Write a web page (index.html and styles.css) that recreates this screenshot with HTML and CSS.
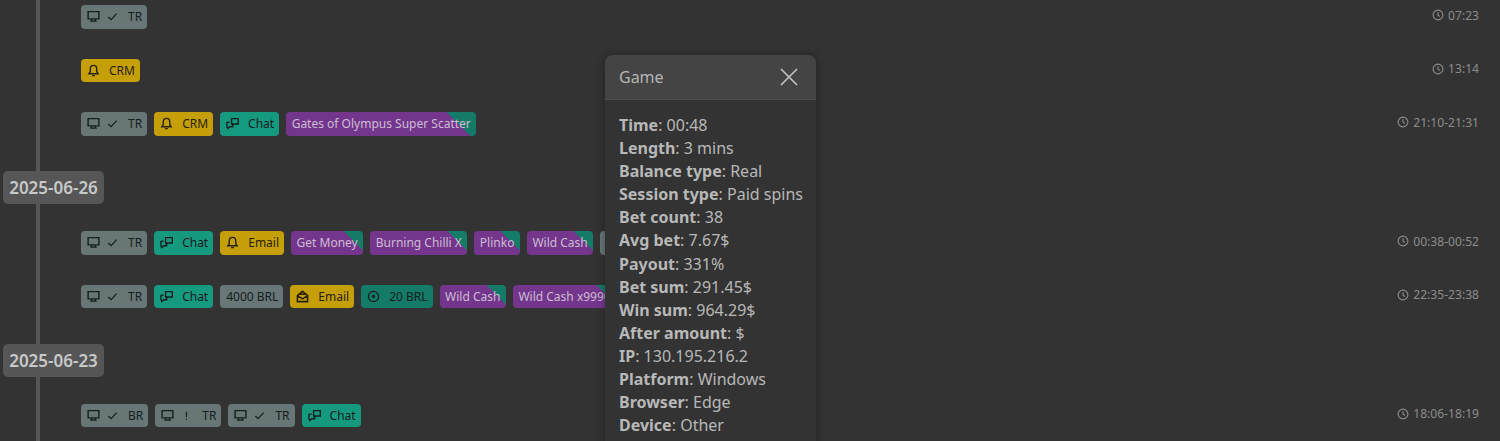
FILE: index.html
```html
<!DOCTYPE html>
<html lang="en">
<head>
    <meta charset="UTF-8">
    <meta name="viewport" content="width=device-width, initial-scale=1.0">
    <title>Player timeline</title>
    <link rel="stylesheet" href="styles.css">
</head>
<body>
    <!-- icon sprite -->
    <svg class="sprite" xmlns="http://www.w3.org/2000/svg">
        <symbol id="i-desktop" viewBox="0 0 14 14"><path d="M1.2 1.800h11.600v7.700H1.200zM5 9.500v2.500M9 9.500v2.500M3.500 12h7" fill="none" stroke="currentColor" stroke-width="1.500"/></symbol>
        <symbol id="i-check" viewBox="0 0 14 14"><path d="M2.500 7.500l3 3 6-6.500" fill="none" stroke="currentColor" stroke-width="1.300"/></symbol>
        <symbol id="i-warn" viewBox="0 0 14 14"><path d="M7 3v5.500M7 10.200v1.500" fill="none" stroke="currentColor" stroke-width="1.300"/></symbol>
        <symbol id="i-bell" viewBox="0 0 14 14"><path d="M7 1.500c-2.400 0-3.500 1.800-3.500 4v2.800L2 10.500h10L10.500 8.300V5.500c0-2.200-1.100-4-3.500-4zM5.500 12.500h3" fill="none" stroke="currentColor" stroke-width="1.500"/></symbol>
        <symbol id="i-chat" viewBox="0 0 14 14"><path d="M6 1.800h7.200v5.700H8.500L7 9V7.500H6zM1 5.500h3M1 5.500v5L2 12.500l2-2h4" fill="none" stroke="currentColor" stroke-width="1.500"/></symbol>
        <symbol id="i-mail" viewBox="0 0 14 14"><path d="M1.500 6L7 1.500 12.500 6v6.500h-11zM1.500 6L7 9.500 12.500 6M4 4.500h6" fill="none" stroke="currentColor" stroke-width="1.700"/></symbol>
        <symbol id="i-target" viewBox="0 0 14 14"><circle cx="7" cy="7" r="5.500" fill="none" stroke="currentColor" stroke-width="1.400"/><circle cx="7" cy="7" r="1.800" fill="currentColor"/></symbol>
        <symbol id="i-clock" viewBox="0 0 14 14"><circle cx="7" cy="7" r="5.700" fill="none" stroke="currentColor" stroke-width="1.300"/><path d="M7 3.800V7l2 2" fill="none" stroke="currentColor" stroke-width="1.300"/></symbol>
    </svg>

    <main class="timeline">
        <div class="event">
            <div class="badges">
                <span class="badge device"><svg class="icon"><use href="#i-desktop"/></svg><svg class="icon"><use href="#i-check"/></svg><span>TR</span></span>
            </div>
            <div class="time"><svg class="clock"><use href="#i-clock"/></svg>07:23</div>
        </div>
        <div class="event">
            <div class="badges">
                <span class="badge crm"><svg class="icon"><use href="#i-bell"/></svg><span>CRM</span></span>
            </div>
            <div class="time"><svg class="clock"><use href="#i-clock"/></svg>13:14</div>
        </div>
        <div class="event">
            <div class="badges">
                <span class="badge device"><svg class="icon"><use href="#i-desktop"/></svg><svg class="icon"><use href="#i-check"/></svg><span>TR</span></span>
                <span class="badge crm"><svg class="icon"><use href="#i-bell"/></svg><span>CRM</span></span>
                <span class="badge chat"><svg class="icon"><use href="#i-chat"/></svg><span>Chat</span></span>
                <span class="badge game game-long">Gates of Olympus Super Scatter</span>
            </div>
            <div class="time"><svg class="clock"><use href="#i-clock"/></svg>21:10-21:31</div>
        </div>

        <div class="date">2025-06-26</div>

        <div class="event">
            <div class="badges">
                <span class="badge device"><svg class="icon"><use href="#i-desktop"/></svg><svg class="icon"><use href="#i-check"/></svg><span>TR</span></span>
                <span class="badge chat"><svg class="icon"><use href="#i-chat"/></svg><span>Chat</span></span>
                <span class="badge crm"><svg class="icon"><use href="#i-bell"/></svg><span>Email</span></span>
                <span class="badge game">Get Money</span>
                <span class="badge game">Burning Chilli X</span>
                <span class="badge game">Plinko</span>
                <span class="badge game">Wild Cash</span>
                <span class="badge device"></span>
            </div>
            <div class="time"><svg class="clock"><use href="#i-clock"/></svg>00:38-00:52</div>
        </div>
        <div class="event">
            <div class="badges">
                <span class="badge device"><svg class="icon"><use href="#i-desktop"/></svg><svg class="icon"><use href="#i-check"/></svg><span>TR</span></span>
                <span class="badge chat"><svg class="icon"><use href="#i-chat"/></svg><span>Chat</span></span>
                <span class="badge device">4000 BRL</span>
                <span class="badge crm"><svg class="icon"><use href="#i-mail"/></svg><span>Email</span></span>
                <span class="badge bonus"><svg class="icon"><use href="#i-target"/></svg><span>20 BRL</span></span>
                <span class="badge game">Wild Cash</span>
                <span class="badge game">Wild Cash x9990</span>
            </div>
            <div class="time"><svg class="clock"><use href="#i-clock"/></svg>22:35-23:38</div>
        </div>

        <div class="date">2025-06-23</div>

        <div class="event">
            <div class="badges">
                <span class="badge device"><svg class="icon"><use href="#i-desktop"/></svg><svg class="icon"><use href="#i-check"/></svg><span>BR</span></span>
                <span class="badge device"><svg class="icon"><use href="#i-desktop"/></svg><svg class="icon"><use href="#i-warn"/></svg><span>TR</span></span>
                <span class="badge device"><svg class="icon"><use href="#i-desktop"/></svg><svg class="icon"><use href="#i-check"/></svg><span>TR</span></span>
                <span class="badge chat"><svg class="icon"><use href="#i-chat"/></svg><span>Chat</span></span>
            </div>
            <div class="time"><svg class="clock"><use href="#i-clock"/></svg>18:06-18:19</div>
        </div>
    </main>

    <section class="modal">
        <header class="modal-header">
            <h2>Game</h2>
            <svg class="modal-close" viewBox="0 0 18 18"><path d="M1 1l16 16M17 1L1 17" fill="none" stroke="currentColor" stroke-width="1.700"/></svg>
        </header>
        <div class="modal-body">
            <div><b>Time</b>: 00:48</div>
            <div><b>Length</b>: 3 mins</div>
            <div><b>Balance type</b>: Real</div>
            <div><b>Session type</b>: Paid spins</div>
            <div><b>Bet count</b>: 38</div>
            <div><b>Avg bet</b>: 7.67$</div>
            <div><b>Payout</b>: 331%</div>
            <div><b>Bet sum</b>: 291.45$</div>
            <div><b>Win sum</b>: 964.29$</div>
            <div><b>After amount</b>: $</div>
            <div><b>IP</b>: 130.195.216.2</div>
            <div><b>Platform</b>: Windows</div>
            <div><b>Browser</b>: Edge</div>
            <div><b>Device</b>: Other</div>
        </div>
    </section>
</body>
</html>
```

FILE: styles.css
```css
html, body {
    height: 100%;
}

body {
    margin: 0;
    overflow: hidden;
    background: #333333;
    color: #b8b8b8;
    font-family: 'Noto Sans', 'Open Sans', sans-serif;
}

.sprite {
    display: none;
}

/* timeline */
.timeline {
    display: flex;
    flex-direction: column;
    margin-left: 36px;
    min-height: 100%;
    padding-top: 5px;
    box-sizing: border-box;
    border-left: 4px solid #565656;
}

.event {
    display: flex;
    flex: none;
    justify-content: space-between;
    height: 23.5px;
    margin-bottom: 30px;
    padding: 0 21px 0 41px;
}

.badges {
    display: flex;
    gap: 7px;
}

.badge {
    display: flex;
    align-items: center;
    gap: 9px;
    padding: 0 5px 0 6px;
    border-radius: 4px;
    font-size: 12px;
    white-space: nowrap;
    color: #142020;
}

.device {
    background: #687676;
}

.crm {
    background: #c49f07;
    color: #2a2208;
}

.chat {
    background: #159a80;
}

.bonus {
    background: #137b67;
}

.game {
    padding: 0 5.5px;
    background: linear-gradient(225deg, #137b67 14px, #73368c 14px);
    color: #cdbdd4;
}

.game-long {
    background: linear-gradient(225deg, #137b67 21px, #73368c 21px);
}

.icon {
    width: 13px;
    height: 13px;
    flex: none;
}

.icon + .icon {
    margin-left: -3px;
}

.time {
    display: flex;
    align-items: center;
    gap: 4px;
    height: 20px;
    font-size: 12.1px;
    color: #8c8c8c;
}

.clock {
    width: 12px;
    height: 12px;
}

.date {
    flex: none;
    width: 101px;
    height: 33px;
    margin: 5.5px 0 27px -37px;
    display: flex;
    align-items: center;
    justify-content: center;
    border-radius: 5px;
    background: #565656;
    color: #c8c8c8;
    font-size: 17px;
    font-weight: 600;
}

/* game details popup */
.modal {
    position: absolute;
    left: 605px;
    top: 55px;
    width: 211px;
    height: 420px;
    border-radius: 8px;
    background: #333333;
    box-shadow: 0 0 8px rgba(0, 0, 0, 0.35);
    overflow: hidden;
}

.modal-header {
    display: flex;
    align-items: center;
    justify-content: space-between;
    height: 45px;
    padding: 0 18px 0 14px;
    box-sizing: border-box;
    background: #444444;
    border-bottom: 1px solid #4e4e4e;
}

.modal-header h2 {
    margin: 0;
    font-size: 16px;
    font-weight: 400;
    color: #b4b4b4;
}

.modal-close {
    width: 18px;
    height: 18px;
    color: #c0c0c0;
}

.modal-body {
    padding: 14px 14px 0;
    font-size: 16px;
    line-height: 23.1px;
    white-space: nowrap;
}

.modal-body b {
    font-weight: 700;
}
```
